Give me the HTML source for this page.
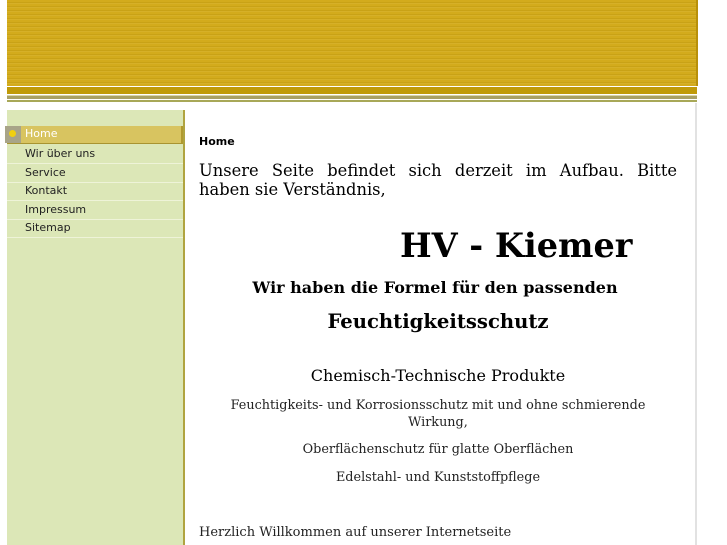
<!DOCTYPE html>
<html><head><meta charset="utf-8"><style>
body{margin:0;width:727px;height:545px;overflow:hidden;background:#fff;position:relative;font-family:"DejaVu Sans","Liberation Sans",sans-serif}
.a{position:absolute}
#hdr{left:7px;top:0;width:689px;height:86px;background:repeating-linear-gradient(180deg,#d3ab1c 0 2px,#c9a216 2px 3px,#d6b028 3px 4px);border-right:2px solid #b8900a}
.t{position:absolute;white-space:nowrap;color:#000}
.s{font-family:"DejaVu Serif","Liberation Serif",serif}
.nav{position:absolute;left:7px;width:176px;height:18px;border-bottom:1px solid #eef3d8;font-size:11px;line-height:18px;color:#222}
.nav span{padding-left:18px}
</style></head><body>
<div class="a" id="hdr"></div>
<div class="a" style="left:7px;top:87px;width:690px;height:7px;background:#c09a08"></div>
<div class="a" style="left:7px;top:95px;width:690px;height:1px;background:#d8d4a8"></div>
<div class="a" style="left:7px;top:96px;width:690px;height:3px;background:#a8a064"></div>
<div class="a" style="left:7px;top:100px;width:690px;height:2px;background:#a8a858"></div>
<div class="a" style="left:695px;top:103px;width:2px;height:442px;background:#e2e2e2"></div>
<div class="a" style="left:7px;top:110px;width:176px;height:435px;background:#dce7b7;border-right:2px solid #b0a440"></div>
<div class="a" style="left:7px;top:126px;width:174px;height:17px;background:#d8c460;border-right:2px solid #b09a30;border-bottom:1px solid #a89430"></div>
<div class="a" style="left:5px;top:126px;width:16px;height:17px;background:#a8a488"></div>
<div class="a" style="left:9px;top:130px;width:7px;height:7px;border-radius:50%;background:#f0d010"></div>
<div class="t" style="left:25px;top:127px;font-size:11px;color:#fff">Home</div>
<div class="nav" style="top:145px"><span>Wir über uns</span></div>
<div class="nav" style="top:164px"><span>Service</span></div>
<div class="nav" style="top:182px"><span>Kontakt</span></div>
<div class="nav" style="top:201px"><span>Impressum</span></div>
<div class="nav" style="top:219px"><span>Sitemap</span></div>
<div class="t" style="left:199px;top:135px;font-size:11px;font-weight:bold">Home</div>
<div class="a s" style="left:199px;top:161px;width:478px;font-size:16.3px;line-height:19px"><div style="text-align:justify;text-align-last:justify">Unsere Seite befindet sich derzeit im Aufbau. Bitte</div><div>haben sie Verständnis,</div></div>
<div class="t s" style="left:400px;top:226px;font-size:33.5px;font-weight:bold">HV - Kiemer</div>
<div class="a s" style="left:196px;top:278px;width:478px;text-align:center;font-size:16px;font-weight:bold">Wir haben die Formel für den passenden</div>
<div class="a s" style="left:199px;top:310px;width:478px;text-align:center;font-size:19.6px;font-weight:bold">Feuchtigkeitsschutz</div>
<div class="a s" style="left:199px;top:366px;width:478px;text-align:center;font-size:16px">Chemisch-Technische Produkte</div>
<div class="a s" style="left:199px;top:397px;width:478px;text-align:center;font-size:12.8px;line-height:17px;color:#222">Feuchtigkeits- und Korrosionsschutz mit und ohne schmierende Wirkung,</div>
<div class="a s" style="left:199px;top:442px;width:478px;text-align:center;font-size:12.8px;color:#222">Oberflächenschutz für glatte Oberflächen</div>
<div class="a s" style="left:199px;top:470px;width:478px;text-align:center;font-size:12.8px;color:#222">Edelstahl- und Kunststoffpflege</div>
<div class="t s" style="left:199px;top:525px;font-size:13px;color:#222">Herzlich Willkommen auf unserer Internetseite</div>
</body></html>
